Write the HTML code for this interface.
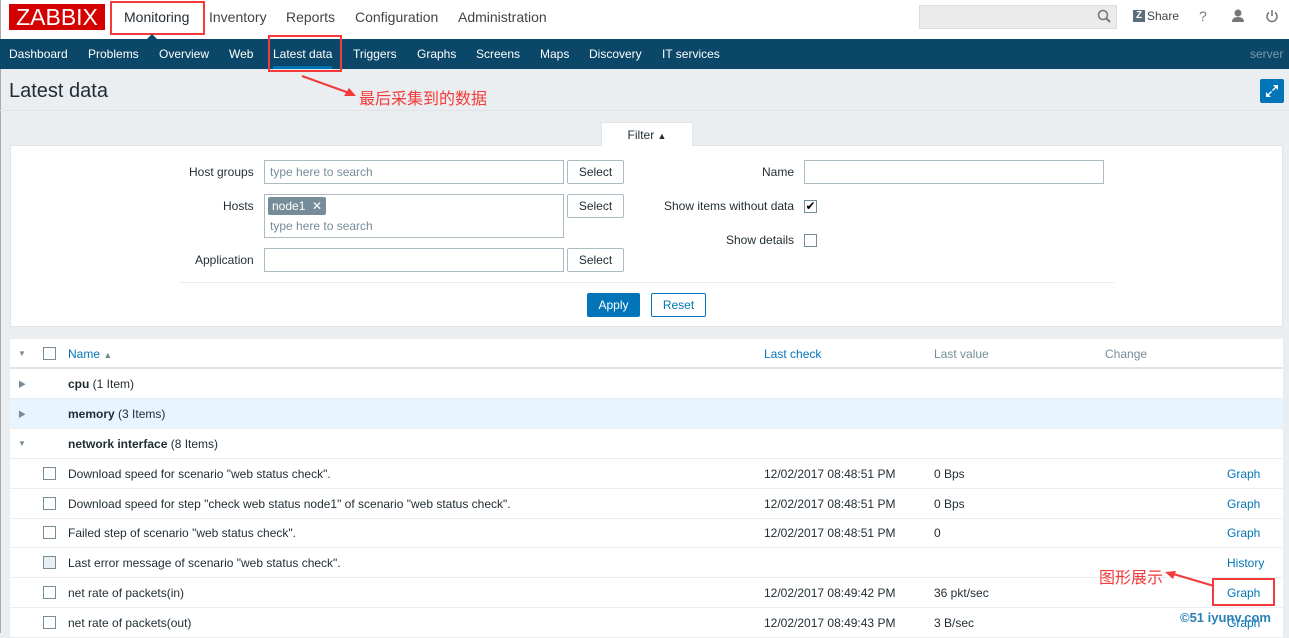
<!DOCTYPE html>
<html><head><meta charset="utf-8"><style>
*{box-sizing:border-box;margin:0;padding:0}
body{width:1289px;height:633px;overflow:hidden;background:#ebeef0;font-family:"Liberation Sans","Noto Sans CJK SC",sans-serif;font-size:12px;color:#1f2c33;position:relative}
.a{position:absolute;white-space:nowrap}
.top{left:0;top:0;width:1289px;height:39px;background:#fff}
.nav{left:0;top:39px;width:1289px;height:30px;background:#0b4768}
.nav span{position:absolute;top:8px;color:#fff;font-size:12px}
.inp{position:absolute;background:#fff;border:1px solid #acbbc2;height:24px}
.btn{position:absolute;background:#fff;border:1px solid #acbbc2;height:24px;text-align:center;line-height:22px;border-radius:2px}
.ph{color:#768d99}
.cb{position:absolute;width:13px;height:13px;border:1px solid #768d99;background:#fff}
.row{position:absolute;left:10px;width:1273px;height:30px;background:#fff;border-bottom:1px solid #ebeef0}
.row>span{position:absolute;top:8px;white-space:nowrap}
.lk{color:#0275b8}
.tg{color:#768d99;font-size:8px;top:10px!important}
.red{color:#f43a3a;font-size:16px}
.box{position:absolute;border:2px solid #f43a3a}
</style></head><body>
<div class="a top"></div>
<div class="a" style="left:0;top:0;width:1px;height:633px;background:#aaa"></div>
<div class="a" style="left:9px;top:4px;width:96px;height:26px;background:#d40000;color:#fff;font-size:23px;line-height:26px;text-align:center;overflow:hidden">ZABBIX</div>
<div class="a" style="left:124px;top:9px;font-size:14px">Monitoring</div>
<div class="a" style="left:209px;top:9px;font-size:14px;color:#444">Inventory</div>
<div class="a" style="left:286px;top:9px;font-size:14px;color:#444">Reports</div>
<div class="a" style="left:355px;top:9px;font-size:14px;color:#444">Configuration</div>
<div class="a" style="left:458px;top:9px;font-size:14px;color:#444">Administration</div>
<div class="box" style="left:110px;top:1px;width:95px;height:34px"></div>
<div class="a" style="left:919px;top:5px;width:198px;height:24px;background:#ebebeb;border:1px solid #ddd"></div>
<svg class="a" style="left:1097px;top:9px" width="14" height="14"><circle cx="6" cy="6" r="4.5" fill="none" stroke="#777" stroke-width="1.6"/><line x1="9" y1="9" x2="13" y2="13" stroke="#777" stroke-width="2"/></svg>
<div class="a" style="left:1133px;top:10px;width:12px;height:12px;background:#5a6d78;color:#fff;font-size:10px;font-weight:bold;text-align:center;line-height:12px">Z</div>
<div class="a" style="left:1147px;top:9px;color:#444">Share</div>
<div class="a" style="left:1199px;top:8px;color:#777;font-size:14px">?</div>
<svg class="a" style="left:1231px;top:9px" width="14" height="14"><circle cx="7" cy="4" r="3.5" fill="#777"/><path d="M1 13 Q1 8 7 8 Q13 8 13 13Z" fill="#777"/></svg>
<svg class="a" style="left:1265px;top:9px" width="14" height="14"><path d="M4 3.5 A5 5 0 1 0 10 3.5" fill="none" stroke="#777" stroke-width="1.6"/><line x1="7" y1="1" x2="7" y2="7" stroke="#777" stroke-width="1.6"/></svg>
<div class="a nav">
<span style="left:9px">Dashboard</span><span style="left:88px">Problems</span><span style="left:159px">Overview</span><span style="left:229px">Web</span><span style="left:273px">Latest data</span><span style="left:353px">Triggers</span><span style="left:417px">Graphs</span><span style="left:476px">Screens</span><span style="left:540px">Maps</span><span style="left:589px">Discovery</span><span style="left:662px">IT services</span><span style="left:1250px;color:#7f98a5">server</span>
</div>
<div class="a" style="left:146px;top:34px;width:0;height:0;border-left:6px solid transparent;border-right:6px solid transparent;border-bottom:6px solid #0b4768"></div>
<div class="a" style="left:273px;top:66px;width:59px;height:3px;background:#0275b8"></div>
<div class="box" style="left:268px;top:35px;width:74px;height:37px"></div>
<div class="a" style="left:9px;top:80px;font-size:20px;color:#1f2c33">Latest data</div>
<svg class="a" style="left:300px;top:74px" width="60" height="30"><line x1="2" y1="2" x2="52" y2="20" stroke="#f43a3a" stroke-width="2"/><path d="M56 22 L44 22 L49 14Z" fill="#f43a3a"/></svg>
<div class="a red" style="left:359px;top:85px">最后采集到的数据</div>
<div class="a" style="left:1260px;top:79px;width:24px;height:24px;background:#0275b8;border-radius:2px"></div>
<svg class="a" style="left:1264px;top:83px" width="16" height="16"><path d="M9 2h5v5l-2-2-3 3-1-1 3-3zM7 14H2V9l2 2 3-3 1 1-3 3z" fill="#fff"/></svg>
<div class="a" style="left:0;top:110px;width:1289px;height:1px;background:#dfe4e7"></div>
<div class="a" style="left:10px;top:145px;width:1273px;height:182px;background:#fff;border:1px solid #dfe4e7"></div>
<div class="a" style="left:601px;top:122px;width:92px;height:24px;background:#fff;border:1px solid #dfe4e7;border-bottom:none;text-align:center;padding-top:5px">Filter <span style="font-size:9px">▲</span></div>
<div class="a" style="left:189px;top:165px">Host groups</div>
<div class="inp" style="left:264px;top:160px;width:300px"><span class="a ph" style="left:5px;top:4px">type here to search</span></div>
<div class="btn" style="left:567px;top:160px;width:57px">Select</div>
<div class="a" style="left:223px;top:199px">Hosts</div>
<div class="inp" style="left:264px;top:194px;width:300px;height:44px"><span class="a" style="left:3px;top:2px;background:#768d99;color:#fff;padding:2px 4px;border-radius:2px">node1 &nbsp;✕</span><span class="a ph" style="left:5px;top:24px">type here to search</span></div>
<div class="btn" style="left:567px;top:194px;width:57px">Select</div>
<div class="a" style="left:195px;top:253px">Application</div>
<div class="inp" style="left:264px;top:248px;width:300px"></div>
<div class="btn" style="left:567px;top:248px;width:57px">Select</div>
<div class="a" style="left:762px;top:165px">Name</div>
<div class="inp" style="left:804px;top:160px;width:300px"></div>
<div class="a" style="left:664px;top:199px">Show items without data</div>
<div class="cb" style="left:804px;top:200px;color:#000;font-size:12px;line-height:11px;text-align:center">✔</div>
<div class="a" style="left:726px;top:233px">Show details</div>
<div class="cb" style="left:804px;top:234px"></div>
<div class="a" style="left:179px;top:282px;width:935px;height:1px;background:#ebeef0"></div>
<div class="btn" style="left:587px;top:293px;width:53px;background:#0275b8;border-color:#0275b8;color:#fff">Apply</div>
<div class="btn" style="left:651px;top:293px;width:55px;border-color:#0275b8;color:#0275b8">Reset</div>
<div class="row" style="top:339px;border-bottom:2px solid #dfe4e7"><span class="tg" style="left:8px">▼</span><div class="cb" style="left:33px;top:8px"></div><span class="lk" style="left:58px">Name <i style="font-style:normal;font-size:9px;color:#768d99">▲</i></span><span class="lk" style="left:754px">Last check</span><span style="left:924px;color:#768d99">Last value</span><span style="left:1095px;color:#768d99">Change</span></div>
<div class="row" style="top:369px"><span class="tg" style="left:8px">▶</span><span style="left:58px"><b>cpu</b> (1 Item)</span></div>
<div class="row" style="top:399px;background:#e8f5ff"><span class="tg" style="left:8px">▶</span><span style="left:58px"><b>memory</b> (3 Items)</span></div>
<div class="row" style="top:429px"><span class="tg" style="left:8px">▼</span><span style="left:58px"><b>network interface</b> (8 Items)</span></div>
<div class="row" style="top:459px"><div class="cb" style="left:33px;top:8px"></div><span style="left:58px">Download speed for scenario "web status check".</span><span style="left:754px">12/02/2017 08:48:51 PM</span><span style="left:924px">0 Bps</span><span class="lk" style="left:1217px">Graph</span></div>
<div class="row" style="top:489px"><div class="cb" style="left:33px;top:8px"></div><span style="left:58px">Download speed for step "check web status node1" of scenario "web status check".</span><span style="left:754px">12/02/2017 08:48:51 PM</span><span style="left:924px">0 Bps</span><span class="lk" style="left:1217px">Graph</span></div>
<div class="row" style="top:519px;height:29px"><div class="cb" style="left:33px;top:7px"></div><span style="left:58px;top:7px">Failed step of scenario "web status check".</span><span style="left:754px;top:7px">12/02/2017 08:48:51 PM</span><span style="left:924px;top:7px">0</span><span class="lk" style="left:1217px;top:7px">Graph</span></div>
<div class="row" style="top:548px"><div class="cb" style="left:33px;top:8px;background:#ebeef0"></div><span style="left:58px">Last error message of scenario "web status check".</span><span class="lk" style="left:1217px">History</span></div>
<div class="row" style="top:578px"><div class="cb" style="left:33px;top:8px"></div><span style="left:58px">net rate of packets(in)</span><span style="left:754px">12/02/2017 08:49:42 PM</span><span style="left:924px">36 pkt/sec</span><span class="lk" style="left:1217px">Graph</span></div>
<div class="row" style="top:608px"><div class="cb" style="left:33px;top:8px"></div><span style="left:58px">net rate of packets(out)</span><span style="left:754px">12/02/2017 08:49:43 PM</span><span style="left:924px">3 B/sec</span><span class="lk" style="left:1217px">Graph</span></div>
<div class="a red" style="left:1099px;top:564px">图形展示</div>
<svg class="a" style="left:1162px;top:568px" width="56" height="24"><line x1="8" y1="5" x2="52" y2="18" stroke="#f43a3a" stroke-width="2"/><path d="M3 4 L14 3 L11 11Z" fill="#f43a3a"/></svg>
<div class="box" style="left:1212px;top:578px;width:63px;height:28px"></div>
<div class="a" style="left:1180px;top:610px;color:#2a7fb5;font-size:13px;font-weight:bold">©51 iyunv.com</div>
</body></html>
